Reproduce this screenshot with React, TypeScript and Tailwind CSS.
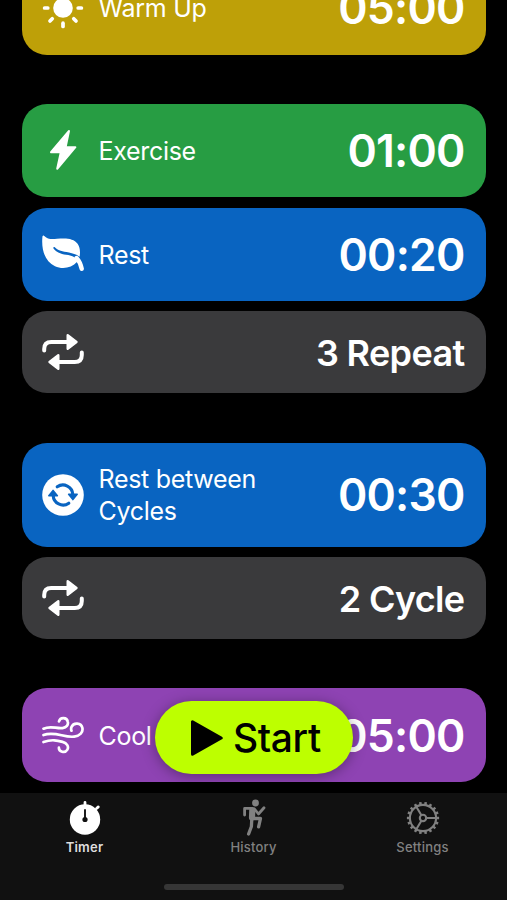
import type { ReactNode } from "react";

function Sun() {
  return (
    <svg className="h-[42px] w-[42px] shrink-0" viewBox="0 0 42 42" fill="none" stroke="white" strokeWidth="3.7" strokeLinecap="round">
      <circle cx="21" cy="21" r="9.8" fill="white" stroke="none" />
      {[0, 45, 90, 135, 180, 225, 270, 315].map((a) => (
        <path key={a} d="M36.2 21H39.4" transform={`rotate(${a} 21 21)`} />
      ))}
    </svg>
  );
}

function Bolt() {
  return (
    <svg className="h-[42px] w-[42px] shrink-0" viewBox="0 0 42 42" fill="white" stroke="white" strokeWidth="2" strokeLinejoin="round">
      <path d="M27 2L9 23.2H18.8L15.2 39.8L33.4 18.2H23.6Z" />
    </svg>
  );
}

function Leaf() {
  return (
    <svg className="h-[42px] w-[42px] shrink-0" viewBox="0 0 42 42" fill="none">
      <path d="M2.6 3.2C5.3 6.1 9 6.4 15 5.8C23.5 4.9 31.5 5 35.6 10.8C38.1 14.5 38.4 19 37.6 23.8C34.5 21.3 31.5 20.3 27 19.4C20.2 18.2 16.5 17.8 12.8 14.2C11.9 13.4 10.8 14.5 11.5 15.4C15.4 20.4 20.5 21.1 26.3 22.1C31.2 23 34.4 25 35.2 28.8C29.5 35.2 20.3 36.6 13 33.2C3 28.6 -0.8 17 .4 4C.5 2.5 1.5 2 2.6 3.2Z" fill="white" />
      <path d="M34.6 25C37.5 28.2 38.8 31.5 39.7 35.8" stroke="white" strokeWidth="4.4" strokeLinecap="round" />
    </svg>
  );
}

function Repeat() {
  return (
    <svg className="h-[42px] w-[42px] shrink-0" viewBox="0 0 42 42" fill="none" stroke="white" strokeWidth="4" strokeLinecap="round" strokeLinejoin="round">
      <path d="M2.2 19.4V18Q2.2 11 9.2 11H25M39.8 21.6V24Q39.8 31 32.8 31H17" />
      <path d="M25.7 4.3L34.5 11L25.7 17.7ZM16.3 24.3L7.5 31L16.3 37.7Z" fill="white" strokeWidth="2.4" />
    </svg>
  );
}

function Cycle() {
  return (
    <svg className="h-[42px] w-[42px] shrink-0" viewBox="0 0 42 42" fill="none">
      <circle cx="21" cy="21" r="20.8" fill="white" />
      <g stroke="#0964c1" strokeWidth="3.1" strokeLinecap="round">
        <path d="M15.2 12.8A9.9 9.9 0 0 1 30.8 20.6M26.8 29.2A9.9 9.9 0 0 1 11.2 21.4" />
        <path d="M26.6 20.3H35.2L30.9 25.6ZM6.8 21.7H15.4L11.1 16.4Z" fill="#0964c1" strokeWidth="1.5" strokeLinejoin="round" />
      </g>
    </svg>
  );
}

function Wind() {
  return (
    <svg className="h-[42px] w-[42px] shrink-0" viewBox="0 0 42 42" fill="none" stroke="white" strokeWidth="2.7" strokeLinecap="round">
      <path d="M1.5 14.7C9 11.2 14 14.9 20.5 14.1C24.6 13.5 26.5 11 25.8 7.7C25 3.2 18.2 2.9 17 7.4" />
      <path d="M1.5 21C13 16.7 22 24 32.2 22.6C38 21.9 41.2 18.4 40.4 14C39.3 8.4 31.4 8.1 29.5 13C28.8 14.8 29.2 16 29.5 16.7" />
      <path d="M1.5 28C10 25 15.5 26.5 20.6 27.9C25 29 27.2 32.6 25.2 35.9C23 39.5 16.7 37.8 16.9 33.7" />
    </svg>
  );
}

function StageCard({ icon, label, value, className, small }: { icon: ReactNode; label?: string; value: string; className: string; small?: boolean }) {
  return (
    <section className={`flex shrink-0 items-center rounded-[25px] pr-[21px] pl-5 text-white ${className}`}>
      {icon}
      <span className="ml-[15px] w-[180px] pt-px text-[25px] leading-8 tracking-[-0.3px]">{label}</span>
      <strong className={`ml-auto whitespace-nowrap pt-[2px] font-semibold ${small ? "text-[36px] tracking-[-0.65px]" : "text-[44.5px] tracking-[-0.8px]"}`}>{value}</strong>
    </section>
  );
}

function TimerIcon() {
  return (
    <svg className="h-[34px] w-[34px]" viewBox="0 0 34 34" fill="none" strokeLinecap="round">
      <circle cx="17" cy="18.5" r="15.2" fill="white" />
      <path d="M17 1.5V5M28.5 7.5L30.3 5.9" stroke="white" strokeWidth="2.8" />
      <path d="M17 9V18" stroke="#111" strokeWidth="1.9" />
      <circle cx="17" cy="18.5" r="2.6" fill="#111" />
    </svg>
  );
}

function Runner() {
  return (
    <svg className="h-[38px] w-[28px]" viewBox="0 0 28 38" fill="none" stroke="#818181" strokeLinecap="round" strokeLinejoin="round">
      <circle cx="15.5" cy="4" r="3.4" fill="#818181" stroke="none" />
      <path d="M12.3 11L12 18.5" strokeWidth="6.2" />
      <path d="M11 9.4H4.6V16M14.5 10L18.5 15L24 8.8" strokeWidth="2.8" />
      <path d="M12.5 19.5H20.5L18.6 27.8M11.8 20L11.4 27.5L8.6 35" strokeWidth="3.3" />
    </svg>
  );
}

function Gear() {
  return (
    <svg className="h-[34px] w-[34px]" viewBox="0 0 34 34" fill="none" stroke="#818181" strokeWidth="2.1">
      <circle cx="17" cy="17" r="13.1" />
      <circle cx="17" cy="17" r="3.2" />
      <path d="M20.2 17H30M15.4 14.2L10.3 5.8M15.4 19.8L10.3 28.2" />
      {Array.from({ length: 18 }, (_, i) => (
        <path key={i} d="M30 17H33.1" strokeWidth="2.5" transform={`rotate(${i * 20} 17 17)`} />
      ))}
    </svg>
  );
}

function Tab({ icon, label, active }: { icon: ReactNode; label: string; active?: boolean }) {
  return (
    <button className={`flex flex-1 flex-col items-center text-[13px] leading-4 tracking-[0.2px] ${active ? "font-semibold text-[#dedede]" : "font-medium text-[#818181]"}`}>
      <span className="mb-px flex h-10 items-center">{icon}</span>
      {label}
    </button>
  );
}

export default function App() {
  return (
    <div className="relative h-[900px] w-[507px] overflow-hidden bg-black font-['Inter',sans-serif]">
      <main className="-mt-[38.9px] flex flex-col px-[21.5px]">
        <StageCard icon={<Sun />} label="Warm Up" value="05:00" className="h-[93.4px] bg-[#bea008]" />
        <StageCard icon={<Bolt />} label="Exercise" value="01:00" className="mt-[49.2px] h-[93.4px] bg-[#279d43]" />
        <StageCard icon={<Leaf />} label="Rest" value="00:20" className="mt-[10.5px] h-[93.4px] bg-[#0964c1]" />
        <StageCard icon={<Repeat />} value="3 Repeat" small className="mt-[10.4px] h-[82px] bg-[#3a3a3c]" />
        <StageCard icon={<Cycle />} label="Rest between Cycles" value="00:30" className="mt-[49.2px] h-[104.2px] bg-[#0964c1]" />
        <StageCard icon={<Repeat />} value="2 Cycle" small className="mt-[10.4px] h-[82px] bg-[#3a3a3c]" />
        <StageCard icon={<Wind />} label="Cool Down" value="05:00" className="mt-[49.2px] h-[93.4px] bg-[#8e43b3]" />
      </main>
      <button className="absolute top-[701px] left-[155px] flex h-[73px] w-[198px] items-center rounded-full bg-[#bdff00] pl-9 text-black shadow-[0_2px_14px_rgba(0,0,0,0.35)]">
        <svg className="h-9 w-8" viewBox="0 0 32 36" stroke="black" strokeWidth="3" strokeLinejoin="round">
          <path d="M1.5 1.8V34.2L30.2 18Z" />
        </svg>
        <span className="ml-[10px] pt-px text-[39px] font-medium tracking-[-0.4px]">Start</span>
      </button>
      <footer className="absolute inset-x-0 bottom-0 h-[107px] bg-[#111] pt-[5px]">
        <nav className="flex">
          <Tab icon={<TimerIcon />} label="Timer" active />
          <Tab icon={<Runner />} label="History" />
          <Tab icon={<Gear />} label="Settings" />
        </nav>
        <div className="mx-auto mt-[29px] h-1.5 w-[180px] rounded-full bg-[#363636]" />
      </footer>
    </div>
  );
}
